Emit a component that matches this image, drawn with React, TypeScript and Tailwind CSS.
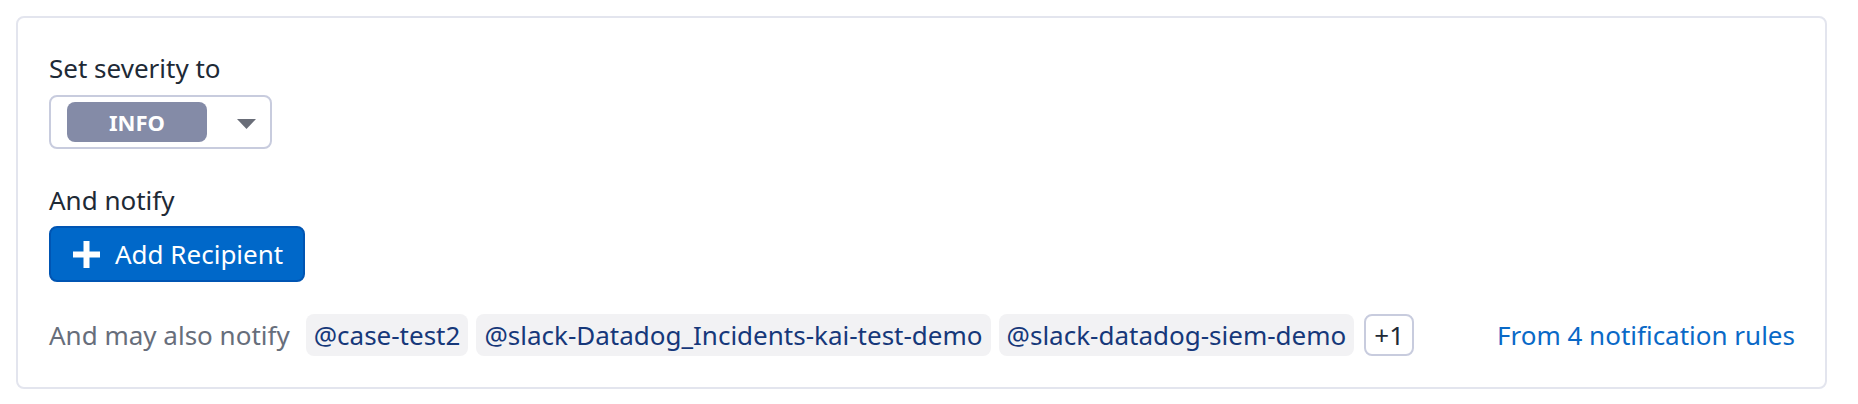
import React from "react";

const tags = ["@case-test2", "@slack-Datadog_Incidents-kai-test-demo", "@slack-datadog-siem-demo"];

export default function App() {
  return (
    <div className="w-[1858px] h-[404px] bg-white font-['Noto_Sans',sans-serif] pt-4 pl-4">
      <div className="w-[1811px] h-[373px] border-2 border-[#e3e5ee] rounded-[8px] pl-[31px] pr-[30px] pt-[32px] flex flex-col">
        <div className="text-[26px] leading-[36px] text-[#1e2a36]">Set severity to</div>
        <div className="mt-[9px] w-[223px] h-[54px] border-2 border-[#c8ccde] rounded-[8px] flex items-center pl-[16px] pr-[14px]">
          <div className="w-[140px] h-[40px] rounded-[8px] bg-[#848ba7] flex items-center justify-center text-white font-bold text-[22px] leading-none">
            INFO
          </div>
          <svg className="ml-auto mt-[3px]" width="19" height="10" viewBox="0 0 19 10">
            <path d="M0 0 L19 0 L9.5 10 Z" fill="#696d78" />
          </svg>
        </div>
        <div className="mt-[33px] text-[26px] leading-[36px] text-[#1e2a36]">And notify</div>
        <div className="mt-[8px]">
          <button className="h-[56px] border-2 border-[#0055b3] bg-[#0068c9] rounded-[8px] flex items-center pl-[22px] pr-[20px] text-white text-[26px] leading-[36px]">
            <svg width="27" height="27" viewBox="0 0 27 27">
              <rect x="10.5" y="0" width="6" height="27" fill="#ffffff" />
              <rect x="0" y="10.5" width="27" height="6" fill="#ffffff" />
            </svg>
            <span className="ml-[15px]">Add Recipient</span>
          </button>
        </div>
        <div className="mt-[32px] flex items-center text-[26px] leading-[36px]">
          <span className="text-[#676e7b]">And may also notify</span>
          <div className="ml-4 flex items-center gap-2">
            {tags.map((t) => (
              <span key={t} className="h-[42px] flex items-center px-[8px] rounded-[8px] bg-[#f2f2f4] text-[#16387a]">
                {t}
              </span>
            ))}
            <span className="ml-[2px] h-[42px] flex items-center px-2 rounded-[8px] border-2 border-[#c8ccde] bg-white text-[#1e2a36]">
              +1
            </span>
          </div>
          <span className="ml-auto text-[#0a69c7]">From 4 notification rules</span>
        </div>
      </div>
    </div>
  );
}
